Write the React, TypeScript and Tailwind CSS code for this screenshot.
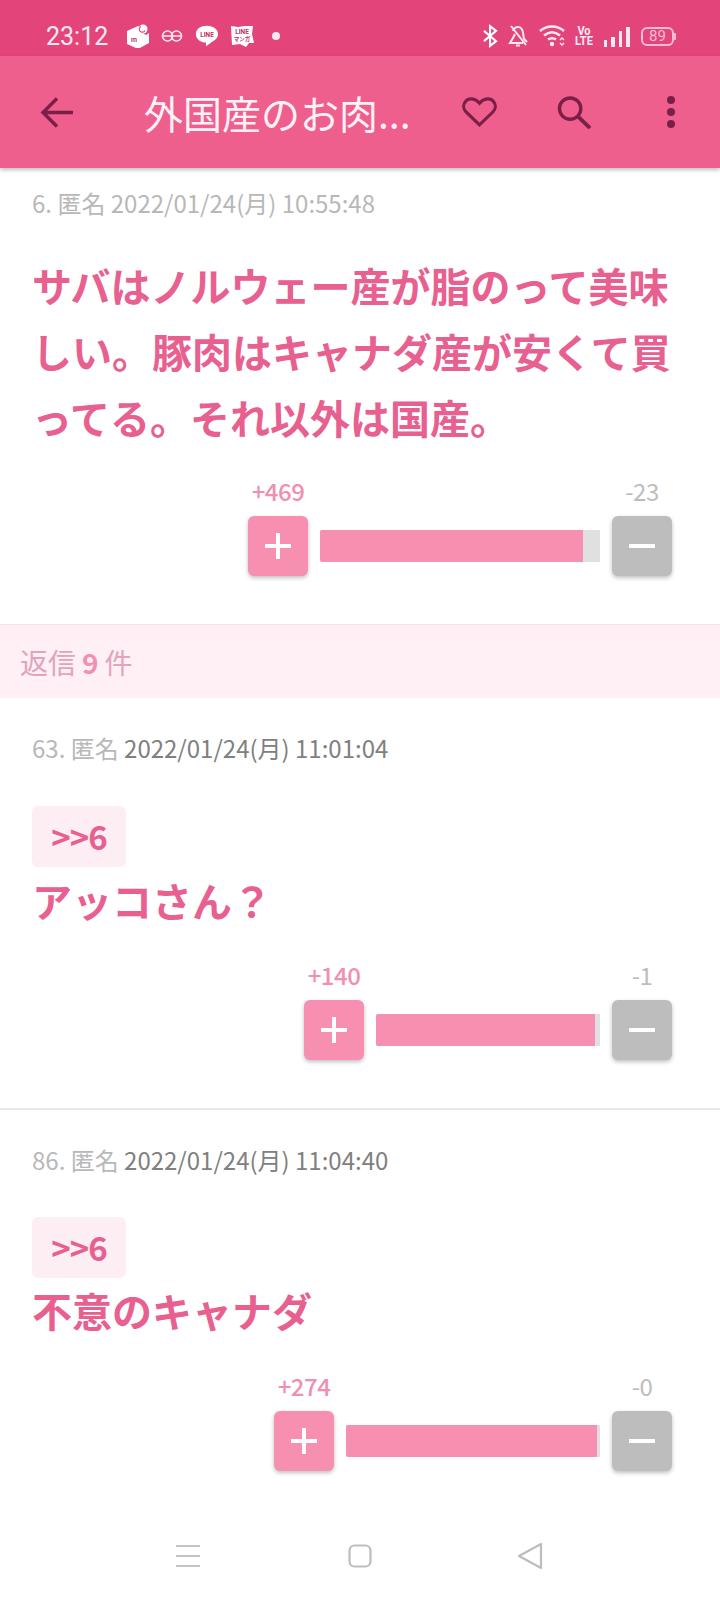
import React from "react";

const cjk = { fontFamily: '"Noto Sans CJK JP", "Noto Sans", sans-serif' };

function Vote({ plus, minus, barW, fillW }: { plus: string; minus: string; barW: number; fillW: number }) {
  return (
    <div className="flex justify-end pr-[48px]">
      <div className="flex flex-col">
        <div className="flex justify-between h-[36px] items-center text-[24px] leading-[36px] tracking-[-0.5px]">
          <span className="w-[60px] flex justify-center whitespace-nowrap text-[#f08fb0] font-medium">{plus}</span>
          <span className="w-[60px] flex justify-center whitespace-nowrap text-[#bdbdbd]">{minus}</span>
        </div>
        <div className="flex items-center gap-[12px] mt-[7px]">
          <div className="w-[60px] h-[60px] rounded-[6px] bg-[#f78fb1] shadow-[0_2px_4px_rgba(0,0,0,0.25)] flex items-center justify-center">
            <svg width="26" height="26" viewBox="0 0 26 26"><path d="M13 0v26M0 13h26" stroke="#fff" strokeWidth="4" /></svg>
          </div>
          <div className="h-[32px] bg-[#e0e0e0] overflow-hidden rounded-l-[2px]" style={{ width: barW }}>
            <div className="h-full bg-[#f78fb1]" style={{ width: fillW }} />
          </div>
          <div className="w-[60px] h-[60px] rounded-[6px] bg-[#bdbdbd] shadow-[0_2px_4px_rgba(0,0,0,0.25)] flex items-center justify-center">
            <svg width="26" height="26" viewBox="0 0 26 26"><path d="M0 13h26" stroke="#fff" strokeWidth="4" /></svg>
          </div>
        </div>
      </div>
    </div>
  );
}

function Meta({ num, date, dark }: { num: string; date: string; dark?: boolean }) {
  return (
    <div className="pl-[32px] text-[24px] leading-[36px] whitespace-nowrap text-[#b8b8b8]">
      {num} 匿名 <span className={dark ? "text-[#808080]" : ""}>{date}</span>
    </div>
  );
}

function Chip() {
  return (
    <div className="ml-[32px] w-[94px] h-[61px] rounded-[6px] bg-[#fdeef4] flex items-center justify-center text-[33px] font-semibold tracking-[-1px] text-[#e8608f] leading-none">
      &gt;&gt;6
    </div>
  );
}

function StatusBar() {
  return (
    <div className="h-[56px] bg-[#e3457b] flex items-center justify-between pl-[46px] pr-[44px] shrink-0 pt-[16px] text-white">
      <div className="flex items-center">
        <span className="text-[25px] leading-none font-['Roboto',sans-serif] text-[#fdeaf1] w-[80px]">23:12</span>
        <svg width="24" height="24" viewBox="0 0 24 24">
          <path d="M1 7l11-5 4 2-1 4 5 3 3-2v10l-11 6-11-5z" fill="#fff" />
          <circle cx="17" cy="5" r="4.5" fill="#fff" />
          <path d="M15 2.500a3 3 0 1 0 4 4" fill="none" stroke="#e3457b" strokeWidth="1.200" />
          <text x="8" y="18" textAnchor="middle" fontSize="7" fontWeight="700" fill="#b04070" fontFamily="Roboto">m</text>
        </svg>
        <svg width="22" height="16" viewBox="0 0 22 16" className="ml-[11px]" fill="none" stroke="#fdeaf1" strokeWidth="1.600">
          <circle cx="6.500" cy="8" r="5" />
          <circle cx="15.500" cy="8" r="5" />
          <path d="M2 8h8M12 8h8" />
        </svg>
        <svg width="24" height="24" viewBox="0 0 26 24" className="ml-[12px]">
          <path d="M13 1C6 1 1 4.800 1 10s5 9 11 9l0 4 7-5c4-2 6-5 6-8 0-5-5-9-12-9z" fill="#fff" />
          <text x="13" y="13" textAnchor="middle" fontSize="7" fontWeight="700" fill="#c03060" fontFamily="Roboto">LINE</text>
        </svg>
        <svg width="24" height="24" viewBox="0 0 24 24" className="ml-[11px]">
          <path d="M1 2l7 1 7-1 8 0-1 8 2 9-5 0-3 4-6-3-8 1z" fill="#fff" />
          <text x="12" y="10" textAnchor="middle" fontSize="6.500" fontWeight="700" fill="#c03060" fontFamily="Roboto">LINE</text>
          <text x="12" y="17" textAnchor="middle" fontSize="5.500" fontWeight="700" fill="#c03060" style={cjk}>マンガ</text>
        </svg>
        <div className="w-[8px] h-[8px] rounded-full bg-[#fdeaf1] ml-[18px]" />
      </div>
      <div className="flex items-center">
        <svg width="15" height="24" viewBox="0 0 16 24" fill="none" stroke="#fff" strokeWidth="2.200">
          <path d="M1 6.500l13 11-6.500 5v-21l6.500 5-13 11" />
        </svg>
        <svg width="20" height="22" viewBox="0 0 20 22" className="ml-[10px]" fill="none" stroke="#fdeaf1" strokeWidth="2">
          <path d="M5 6c1-3 3-4 5-4 3 0 5 3 5 6l1 6 3 3M7 9l-2 4-3 5h13M8 20.500h4M3 1l15 19" />
        </svg>
        <svg width="27" height="22" viewBox="0 0 27 22" className="ml-[11px]" fill="none" stroke="#fdeaf1" strokeWidth="2.500">
          <path d="M1 6c7-6 17-6 24 0M5 10.500c5-4 11-4 16 0M9 14.500c3-2 5-2 8 0" />
          <circle cx="13" cy="19" r="2.200" fill="#fdeaf1" stroke="none" />
          <path d="M21 15l2-2 2 2M21 18l2 2 2-2" strokeWidth="1.400" />
        </svg>
        <div className="ml-[10px] flex flex-col items-center text-[13px] leading-[10px] font-bold font-['Roboto',sans-serif] text-[#fdeaf1] w-[16px] scale-x-[0.85]">
          <span>Vo</span>
          <span>LTE</span>
        </div>
        <div className="ml-[12px] flex items-end gap-[4px] h-[20px] mt-[2px]">
          <div className="w-[3px] h-[7px] bg-[#fdeaf1]" />
          <div className="w-[4px] h-[10px] bg-[#fdeaf1]" />
          <div className="w-[3px] h-[16px] bg-[#fdeaf1]" />
          <div className="w-[4px] h-[20px] bg-[#fdeaf1]" />
        </div>
        <div className="ml-[11px] flex items-center">
          <div className="w-[33px] h-[19px] rounded-[6px] border-[2px] border-[#f9bcd2] flex items-center justify-center text-[15px] leading-none text-[#f9bcd2] font-['Roboto',sans-serif]">
            89
          </div>
          <div className="w-[2px] h-[7px] bg-[#f9bcd2] rounded-r-[1px]" />
        </div>
      </div>
    </div>
  );
}

function AppBar() {
  const c = "#7a1f47";
  return (
    <div className="relative z-10 h-[112px] bg-[#ef5f8e] shadow-[0_2px_4px_rgba(0,0,0,0.25)] flex items-center shrink-0">
      <svg width="33" height="31" viewBox="0 0 33 31" className="ml-[40px]" fill="none" stroke={c} strokeWidth="3.500">
        <path d="M33 15.500H3M17 1.500L3 15.500l14 14" />
      </svg>
      <span className="ml-[71px] w-[270px] text-[39px] leading-none text-[#fff2f7] whitespace-nowrap">外国産のお肉...</span>
      <svg width="35" height="32" viewBox="0 0 38 34" className="ml-[48px]" fill="none" stroke={c} strokeWidth="3.400">
        <path d="M19 31L4.500 17C1 13.500 1 9 3.800 5.500 7 1.500 14 1.500 19 7.500c5-6 12-6 15.200-2C37 9 37 13.500 33.500 17z" />
      </svg>
      <svg width="35" height="33" viewBox="0 0 36 34" className="ml-[60px]" fill="none" stroke={c} strokeWidth="3.500">
        <circle cx="13.500" cy="13" r="11" />
        <path d="M21.500 21L34 33" strokeWidth="4" />
      </svg>
      <svg width="8" height="32" viewBox="0 0 8 32" className="ml-[75px]" fill={c}>
        <circle cx="4" cy="4" r="4" />
        <circle cx="4" cy="16" r="4" />
        <circle cx="4" cy="28" r="4" />
      </svg>
    </div>
  );
}

function NavBar() {
  return (
    <div className="h-[110px] shrink-0 flex items-start pt-[54px] pl-[176px] bg-white">
      <svg width="24" height="24" viewBox="0 0 24 24" stroke="#c4c4c4" strokeWidth="2.200">
        <path d="M0 2h24M0 12h24M0 22h24" />
      </svg>
      <svg width="24" height="24" viewBox="0 0 24 24" fill="none" stroke="#bdbdbd" strokeWidth="2.200" className="ml-[148px]">
        <rect x="1.500" y="1.500" width="21" height="21" rx="5" />
      </svg>
      <svg width="26" height="28" viewBox="0 0 26 28" fill="none" stroke="#bdbdbd" strokeWidth="2.200" strokeLinejoin="round" className="ml-[145px] mt-[-2px]">
        <path d="M24 2v24L2 14z" />
      </svg>
    </div>
  );
}

export default function App() {
  return (
    <div className="w-[720px] h-[1600px] flex flex-col overflow-hidden bg-white" style={cjk}>
      <StatusBar />
      <AppBar />
      <div className="flex-1 overflow-hidden">
        <div className="pt-[17px] h-[457px] border-b-[1px] border-[#f9dfe9]">
          <Meta num="6." date="2022/01/24(月) 10:55:48" />
          <div className="mt-[31px] px-[32px] text-[40px] leading-[66px] font-bold text-[#e8608f] tracking-normal">
            サバはノルウェー産が脂のって美味しい。豚肉はキャナダ産が安くて買ってる。それ以外は国産。
          </div>
          <div className="mt-[23px]">
            <Vote plus="+469" minus="-23" barW={280} fillW={263} />
          </div>
        </div>
        <div className="h-[73px] bg-[#fef0f5] flex items-center pl-[20px] text-[28px] text-[#e3a3ba]">
          返信 <span className="font-bold mx-[6px] text-[#f48fb1]">9</span> 件
        </div>
        <div className="pt-[32px] h-[412px] border-b-[2px] border-[#e8e8e8]">
          <Meta num="63." date="2022/01/24(月) 11:01:04" dark />
          <div className="mt-[40px]"><Chip /></div>
          <div className="mt-0 px-[32px] text-[40px] leading-[66px] font-bold text-[#e8608f]">アッコさん？</div>
          <div className="mt-[24px]">
            <Vote plus="+140" minus="-1" barW={224} fillW={219} />
          </div>
        </div>
        <div className="pt-[32px]">
          <Meta num="86." date="2022/01/24(月) 11:04:40" dark />
          <div className="mt-[39px]"><Chip /></div>
          <div className="-mt-px px-[32px] text-[40px] leading-[66px] font-bold text-[#e8608f]">不意のキャナダ</div>
          <div className="mt-[25px]">
            <Vote plus="+274" minus="-0" barW={254} fillW={251} />
          </div>
        </div>
      </div>
      <NavBar />
    </div>
  );
}
